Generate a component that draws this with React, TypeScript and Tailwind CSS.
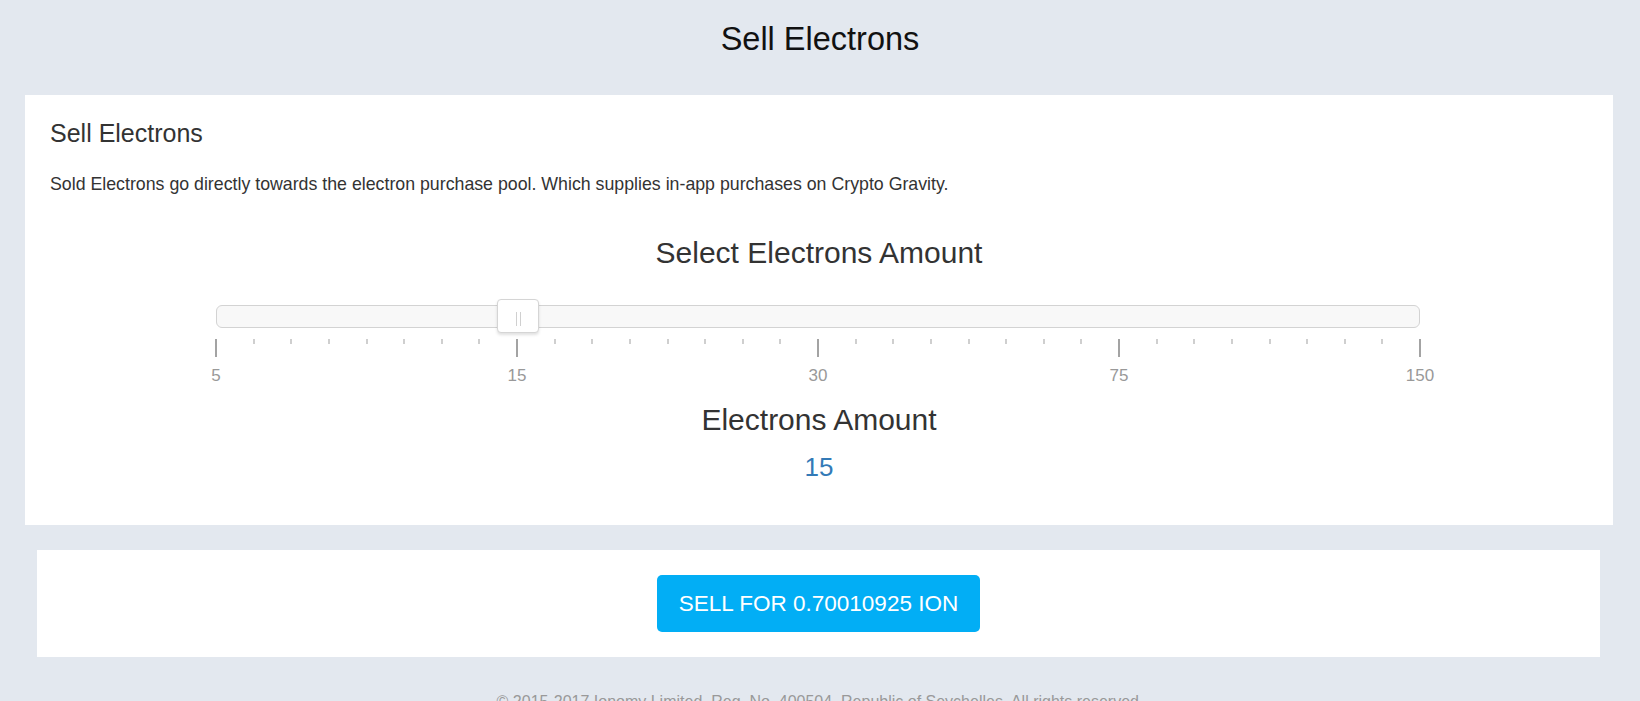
import React from "react";

const TICKS = Array.from({ length: 33 }, (_, i) => i);
const LABELS = ["5", "15", "30", "75", "150"];

function Slider() {
  return (
    <div className="ml-[166px] mt-[30px] w-[1204px]">
      <div className="relative h-[34px]">
        <div className="absolute left-0 right-0 top-[6px] h-[23px] rounded-[6px] border border-[#d3d3d3] bg-[#f8f8f8]" />
        <div className="absolute left-[281px] top-0 h-[34px] w-[42px] rounded-[4px] border border-[#d5d5d5] bg-white shadow-[0_2px_3px_rgba(0,0,0,0.12)]">
          <div className="absolute left-[18px] top-[12px] h-[14px] w-px bg-[#d0d0d0]" />
          <div className="absolute left-[22px] top-[12px] h-[14px] w-px bg-[#d0d0d0]" />
        </div>
      </div>
      <div className="ml-[-1px] mt-[6px] flex h-[18px] w-[1206px] items-start justify-between">
        {TICKS.map((i) =>
          i % 8 === 0 ? (
            <div key={i} className="h-[18px] w-[2px] bg-[#a3a3a3]" />
          ) : (
            <div key={i} className="h-[5px] w-[2px] bg-[#cfcfcf]" />
          )
        )}
      </div>
      <div className="mt-[9px] flex w-[1204px] justify-between text-[17px] leading-[19px] text-[#999]">
        {LABELS.map((l) => (
          <div key={l} className="flex w-0 justify-center whitespace-nowrap">
            {l}
          </div>
        ))}
      </div>
    </div>
  );
}

export default function App() {
  return (
    <div className="min-h-[701px] overflow-hidden bg-[#e3e8ef] font-['Liberation_Sans',Arial,sans-serif]">
      <h1 className="pt-[22px] text-center text-[32.5px] leading-[35px] text-[#111]">
        Sell Electrons
      </h1>
      <div className="ml-[25px] mt-[38px] h-[430px] w-[1588px] bg-white px-[25px] pt-[25px] text-[#333]">
        <h3 className="text-[25px] leading-[26px]">Sell Electrons</h3>
        <p className="mt-[27px] text-[17.75px] leading-[22px]">
          Sold Electrons go directly towards the electron purchase pool. Which
          supplies in-app purchases on Crypto Gravity.
        </p>
        <h2 className="mt-[41px] text-center text-[30px] leading-[33px]">
          Select Electrons Amount
        </h2>
        <Slider />
        <h2 className="mt-[18px] text-center text-[30px] leading-[33px]">
          Electrons Amount
        </h2>
        <div className="mt-[17px] text-center text-[26px] leading-[28px] text-[#337ab7]">
          15
        </div>
      </div>
      <div className="ml-[37px] mt-[25px] flex h-[107px] w-[1563px] items-center justify-center bg-white">
        <button className="h-[57px] w-[323px] rounded-[5px] bg-[#02aef5] text-[22.5px] text-white">
          SELL FOR 0.70010925 ION
        </button>
      </div>
      <footer className="mt-[35px] text-center text-[16px] leading-[20px] text-[#999]">
        © 2015-2017 Ionomy Limited, Reg. No. 400504, Republic of Seychelles. All
        rights reserved.
      </footer>
    </div>
  );
}
